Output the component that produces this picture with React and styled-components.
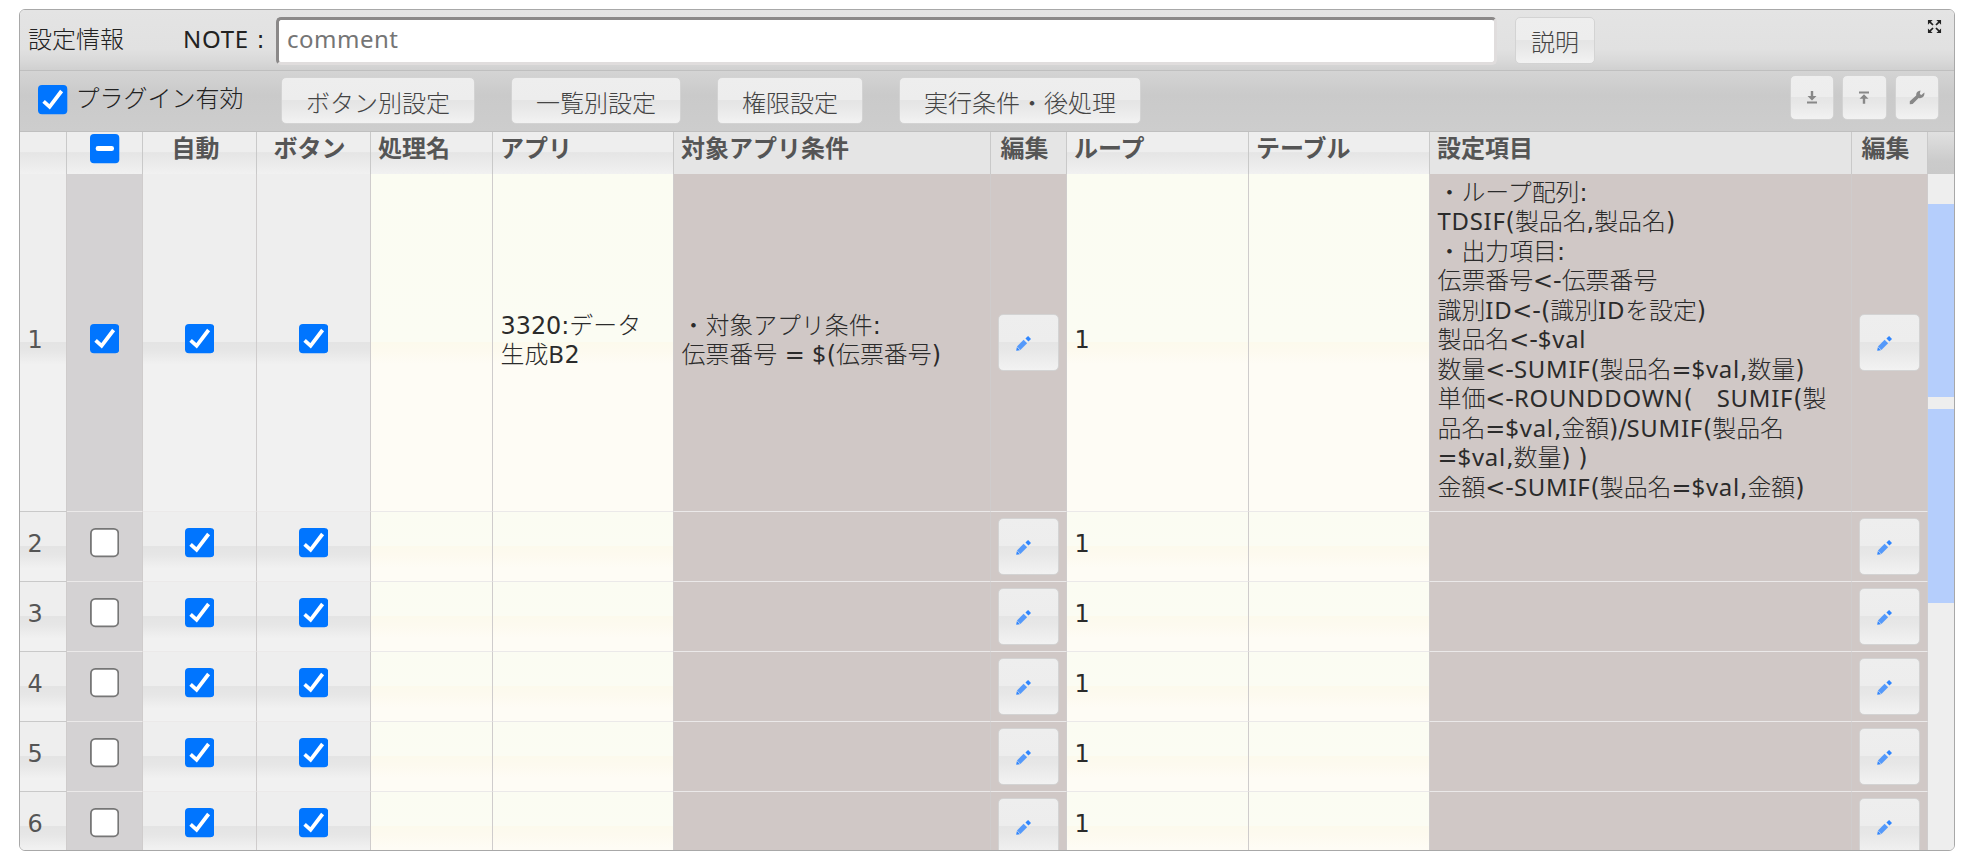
import React from "react";
import styled, { createGlobalStyle, css } from "styled-components";

const GlobalStyle = createGlobalStyle`
    body {
        margin: 0;
        background: #fff;
    }
    * {
        box-sizing: border-box;
    }
`

const fontStack = `"Noto Sans CJK JP", sans-serif`;
const latinStack = `"Noto Sans", "Noto Sans CJK JP", sans-serif`;

const Panel = styled.div`
    display: flex;
    flex-direction: column;
    width: 1936px;
    height: 842px;
    margin: 9px 0 0 19px;
    border: 1px solid #a8a8a8;
    border-radius: 6px;
    overflow: hidden;
    font-family: ${fontStack};
    font-size: 24px;
    line-height: 30px;
    color: #222;
    white-space: nowrap;
`

const Caption = styled.div`
    display: flex;
    align-items: flex-start;
    height: 61px;
    padding: 7px 12px 0 8px;
    border-bottom: 1px solid #bfbfbf;
    background: linear-gradient(#e4e4e4 0%, #e1e1e1 65%, #dadada 82%, #d0d0d0 100%);
`

const CaptionText = styled.span`
    width: ${props => props.$width}px;
    padding-top: 6px;
    font-weight: 300;
`

const Latin = styled.span`
    font-family: ${latinStack};
    font-weight: 400;
    line-height: 1;
    letter-spacing: 0.75px;
`

// 記号と数字は幅の広いフォント
const Wide = styled(Latin)`
    font-family: "DejaVu Sans", sans-serif;
    letter-spacing: 0;
`

const NoteInput = styled.input`
    width: 1221px;
    height: 48px;
    margin-right: 18px;
    padding: 0 8px 6px;
    border: 3px solid;
    border-color: #8b8989 #e0dddd #e0dddd #8b8989;
    border-radius: 5px;
    background: #fff;
    font-family: ${latinStack};
    font-size: 24px;
    letter-spacing: 0.5px;
    outline: none;

    &::placeholder {
        color: #757575;
    }
`

const Button = styled.button`
    display: flex;
    justify-content: center;
    align-items: center;
    flex: none;
    width: ${props => props.$width}px;
    height: ${props => props.$height || 47}px;
    margin: 0;
    padding: ${props => props.$padding || "3px 0 0"};
    border: 1px solid #d3d3d3;
    border-radius: 5px;
    background: linear-gradient(#eeeeee 0%, #ededed 49%, #e5e5e5 50%, #e7e7e7 62%, #f2f2f2 100%);
    color: #444;
    font-family: ${fontStack};
    font-size: 24px;
    font-weight: 300;
    line-height: 30px;
`

const Toolbar = styled.div`
    display: flex;
    height: 61px;
    padding: 4px 15px 0 18px;
    border-bottom: 1px solid #bfbfbf;
    background: linear-gradient(#d4d4d4 0%, #cacaca 40%, #cdcdcd 100%);
`

const PluginLabel = styled.label`
    display: flex;
    gap: 8px;
    width: 243px;
    height: 30px;
    margin-top: 10px;
    font-weight: 300;

    span {
        margin-top: -3px;
    }
`

const ToolbarButtons = styled.div`
    display: flex;
    gap: 36px;
    padding-top: 1.5px;
`

const IconButtons = styled.div`
    display: flex;
    gap: 8px;
    margin-left: auto;
`

const ExpandIcon = styled.svg`
    width: 15px;
    height: 15px;
    margin: 2px 0 0 auto;
`

const CheckSvg = styled.svg`
    display: block;
    flex: none;
    width: 29.5px;
    height: 29.5px;
`

const Header = styled.div`
    display: flex;
    height: 42px;
    background: linear-gradient(#e0e0e0 0%, #cbcbcb 70%, #c9c9c9 100%);
`

const HeaderCell = styled.div`
    width: ${props => props.$width}px;
    padding: ${props => props.$center ? "0 8px 0 0" : "0 0 0 7px"};
    border-right: 1px solid #c9c9c9;
    background: ${props => props.$dark ? "#e5e5e5" : "linear-gradient(#eeeeee 0%, #eeeeee 48%, #e5e5e5 49%, #f1f1f1 100%)"};
    color: #555;
    font-weight: 700;
    font-size: 24px;
    text-align: ${props => props.$center ? "center" : "left"};

    svg {
        margin: 2px 0 0 16px;
    }
`

const Body = styled.div`
    display: flex;
    flex: 1;
    min-height: 0;
    overflow: hidden;
`

const Rows = styled.div`
    flex: none;
    width: 1908px;
`

const Row = styled.div`
    display: flex;
    height: ${props => props.$height}px;
`

const tones = {
    number: css`
        border-bottom-color: #c9c9c9;
        background: linear-gradient(#eee, #eee 50%, #e4e4e4 50%, #e6e6e6 calc(50% + 8px), #f1f1f1 calc(50% + 22px));
    `,
    plain: css`
        background: linear-gradient(#eee, #eee 50%, #e4e4e4 50%, #e6e6e6 calc(50% + 8px), #f1f1f1 calc(50% + 22px));
    `,
    selected: css`
        background: #d4d2d3;
    `,
    edit: css`
        background: linear-gradient(#fbfcf2, #fbfcf3 50%, #fcfaed 50%, #fdfaef calc(50% + 8px), #fefcf5 calc(50% + 22px));
    `,
    locked: css`
        background: #d0c8c6;
    `,
};

const Cell = styled.div`
    display: flex;
    align-items: center;
    flex: none;
    justify-content: ${props => props.$center ? "center" : "flex-start"};
    width: ${props => props.$width}px;
    padding: ${props => props.$center ? "0 0 7px" : "0 0 0 7px"};
    border-right: 1px solid #cfcccc;
    border-bottom: 1px solid #ebe9e9;
    color: ${props => props.$tone === "number" ? "#555" : "#2b2b2b"};
    ${props => tones[props.$tone]}
`

const CellText = styled.div`
    padding: 0 0 9px 0.5px;
    font-size: 23.9px;
    font-weight: 300;
`

const Line = styled.div`
    height: 29.5px;
    line-height: 29.5px;
    white-space: pre;
`

const Scroll = styled.div`
    display: flex;
    flex-direction: column;
    gap: 12px;
    width: 26px;
    padding-top: 30px;
    background: #eee;
`

const Thumb = styled.div`
    height: ${props => props.$height}px;
    background: #b5cefc;
`

const widths = [47, 76, 114, 114, 122, 181, 317, 76, 182, 181, 422, 76];

const headers = [
    { text: "" },
    { text: "", check: true },
    { text: "自動", center: true },
    { text: "ボタン", center: true },
    { text: "処理名" },
    { text: "アプリ" },
    { text: "対象アプリ条件", dark: true },
    { text: "編集", center: true, dark: true },
    { text: "ループ" },
    { text: "テーブル" },
    { text: "設定項目", dark: true },
    { text: "編集", center: true, dark: true },
];

const rows = [
    {
        no: 1,
        checked: true,
        height: 338,
        app: ["3320:データ", "生成B2"],
        condition: ["・対象アプリ条件:", "伝票番号 = $(伝票番号)"],
        items: [
            "・ループ配列:",
            "TDSIF(製品名,製品名)",
            "・出力項目:",
            "伝票番号<-伝票番号",
            "識別ID<-(識別IDを設定)",
            "製品名<-$val",
            "数量<-SUMIF(製品名=$val,数量)",
            "単価<-ROUNDDOWN(　SUMIF(製",
            "品名=$val,金額)/SUMIF(製品名",
            "=$val,数量) )",
            "金額<-SUMIF(製品名=$val,金額)",
        ],
    },
    { no: 2 },
    { no: 3 },
    { no: 4 },
    { no: 5 },
    { no: 6 },
];

// 半角文字だけ別フォントにする
function Text({ lines = [] }) {
    return (
        <CellText>
            {lines.map((line, index) => (
                <Line key={index}>
                    {line.split(/([A-Za-z$]+|[\x20-\x23\x25-\x40]+)/).filter(Boolean).map((part, i) => {
                        if (/^[A-Za-z$]/.test(part)) return <Latin key={i}>{part}</Latin>;
                        if (/^[\x20-\x40]/.test(part)) return <Wide key={i}>{part}</Wide>;
                        return part;
                    })}
                </Line>
            ))}
        </CellText>
    );
}

function Check({ state }) {
    if (state === "off") {
        return (
            <CheckSvg viewBox="0 0 29.5 29.5">
                <rect x="0.9" y="0.9" width="27.4" height="27.4" rx="4.5" fill="#fff" stroke="#767676" strokeWidth="1.8" />
            </CheckSvg>
        );
    }
    return (
        <CheckSvg viewBox="0 0 29.5 29.5">
            <rect width="29.3" height="29.3" rx="4" fill="#0075ff" />
            {state === "mixed"
                ? <rect x="5.7" y="12" width="18.3" height="5" rx="2.3" fill="#fff" />
                : <path d="M5.6 16.4L11.6 21.8L23.6 6" fill="none" stroke="#fff" strokeWidth="3.8" />}
        </CheckSvg>
    );
}

function EditButton() {
    return (
        <Button $width={61} $height={57} $padding="1px 10px 0 0">
            <svg width="15" height="15" viewBox="0 0 14 14" fill="#2f86ff">
                <path d="M0.2 13.8L0.8 10.3L3.7 13.2Z" />
                <path d="M0.9 9.8L7.1 3.5L10.4 6.8L4.1 13Z" opacity="0.8" />
                <path d="M8.8 2.4L11.3 0L14 2.7L11.6 5.2Z" />
            </svg>
        </Button>
    );
}

function GridRow({ row }) {
    const [no, sel, auto, btn, name, app, cond, edit1, loop, table, items, edit2] = widths;
    return (
        <Row $height={row.height || 70}>
            <Cell $width={no} $tone="number"><Text lines={[String(row.no)]} /></Cell>
            <Cell $width={sel} $tone="selected" $center><Check state={row.checked ? "on" : "off"} /></Cell>
            <Cell $width={auto} $tone="plain" $center><Check state="on" /></Cell>
            <Cell $width={btn} $tone="plain" $center><Check state="on" /></Cell>
            <Cell $width={name} $tone="edit" />
            <Cell $width={app} $tone="edit"><Text lines={row.app} /></Cell>
            <Cell $width={cond} $tone="locked"><Text lines={row.condition} /></Cell>
            <Cell $width={edit1} $tone="locked"><EditButton /></Cell>
            <Cell $width={loop} $tone="edit"><Text lines={["1"]} /></Cell>
            <Cell $width={table} $tone="edit" />
            <Cell $width={items} $tone="locked"><Text lines={row.items} /></Cell>
            <Cell $width={edit2} $tone="locked"><EditButton /></Cell>
        </Row>
    );
}

export default function App() {
    return (
        <>
            <GlobalStyle />
            <Panel lang="ja">
                <Caption>
                    <CaptionText $width={155}>設定情報</CaptionText>
                    <CaptionText $width={93}><Latin>NOTE</Latin><Wide> :</Wide></CaptionText>
                    <NoteInput placeholder="comment" />
                    <Button $width={80} $padding="0">説明</Button>
                    <ExpandIcon viewBox="0 0 16 16" fill="#222">
                        <path d="M1 1h5L1 6zM15 1v5L10 1zM1 15v-5l5 5zM15 15h-5l5-5z" />
                        <path d="M3 3L13 13M13 3L3 13" stroke="#222" strokeWidth="1.8" strokeDasharray="4.8 4.5 4.8" />
                    </ExpandIcon>
                </Caption>
                <Toolbar>
                    <PluginLabel>
                        <Check state="on" />
                        <span>プラグイン有効</span>
                    </PluginLabel>
                    <ToolbarButtons>
                        <Button $width={194}>ボタン別設定</Button>
                        <Button $width={170}>一覧別設定</Button>
                        <Button $width={146}>権限設定</Button>
                        <Button $width={242}>実行条件・後処理</Button>
                    </ToolbarButtons>
                    <IconButtons>
                        <Button $width={44.5} $height={44.5} $padding="0">
                            <svg width="10" height="13" viewBox="0 0 10 13" fill="#888">
                                <path d="M3.8 0h2.4v5H9.5L5 9.5 0.5 5h3.3zM0 10.6h10v1.9H0z" />
                            </svg>
                        </Button>
                        <Button $width={44.5} $height={44.5} $padding="0">
                            <svg width="10" height="13" viewBox="0 0 10 13" fill="#888">
                                <path d="M0 0.5h10v1.9H0zM5 3.2L9.5 7.8H6.2v5H3.8v-5H0.5z" />
                            </svg>
                        </Button>
                        <Button $width={44.5} $height={44.5} $padding="0">
                            <svg width="16" height="15" viewBox="0 0 16 15" fill="#888">
                                <path d="M11.5 0.5L10.8 4L12.3 5L15.3 2.6C16.2 6.5 12.8 9 9.6 8L3.6 14L0.8 14.3L0.8 11.2L7.2 5.6C6.8 2.5 9 0.8 11.5 0.5Z" />
                            </svg>
                        </Button>
                    </IconButtons>
                </Toolbar>
                <Header>
                    {headers.map((header, index) => (
                        <HeaderCell key={index} $width={widths[index]} $center={header.center} $dark={header.dark}>
                            {header.check
                                ? <Check state="mixed" />
                                : header.text}
                        </HeaderCell>
                    ))}
                </Header>
                <Body>
                    <Rows>
                        {rows.map((row) => <GridRow key={row.no} row={row} />)}
                    </Rows>
                    <Scroll>
                        <Thumb $height={193} />
                        <Thumb $height={194} />
                    </Scroll>
                </Body>
            </Panel>
        </>
    );
}
